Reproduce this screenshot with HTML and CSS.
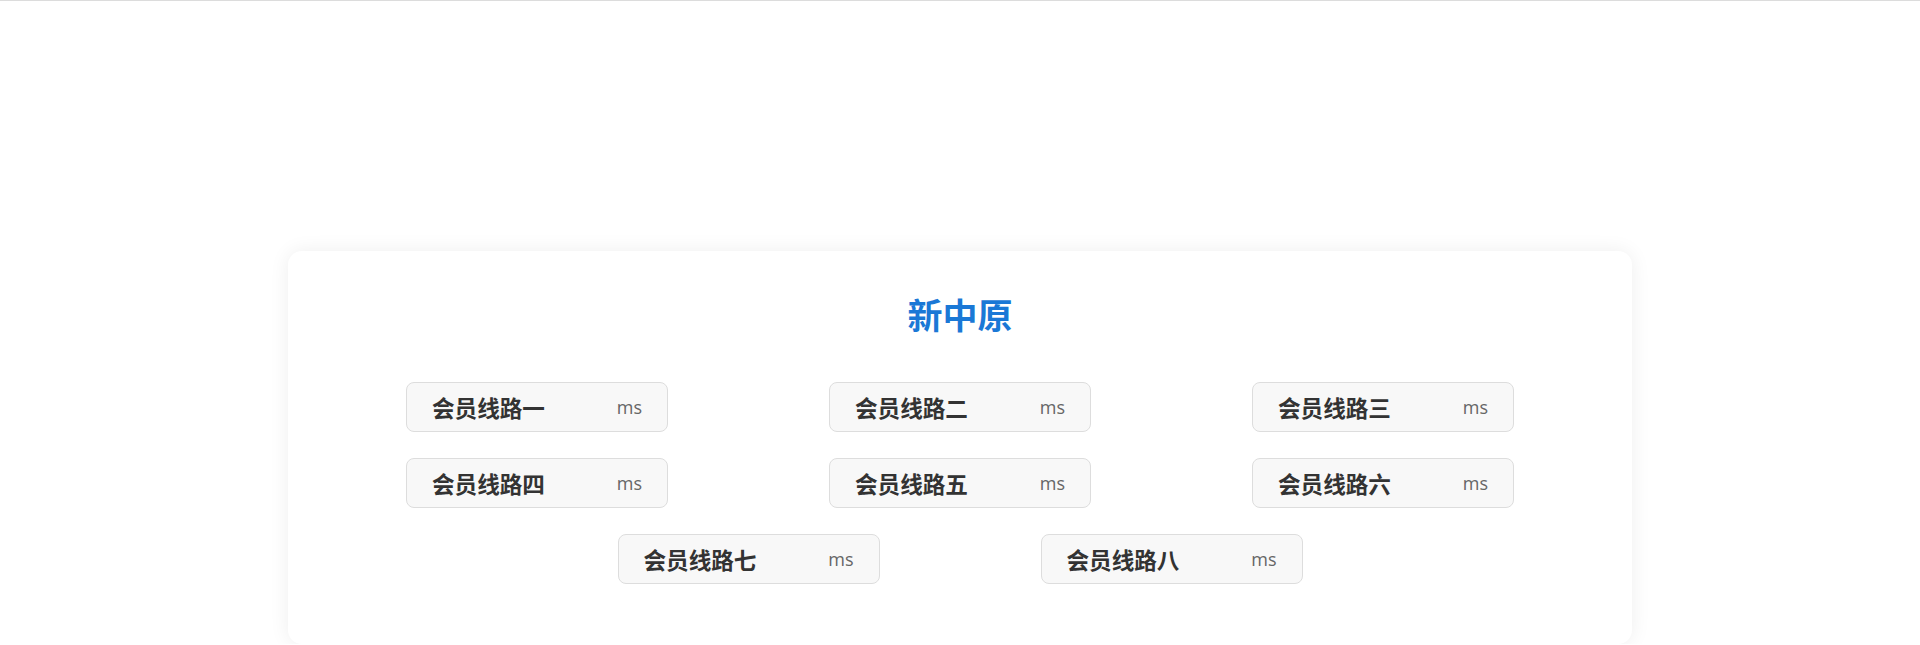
FILE: index.html
```html
<!DOCTYPE html>
<html lang="zh-CN">
<head>
    <meta charset="UTF-8">
    <meta name="viewport" content="width=device-width, initial-scale=1.0">
    <title>新中原</title>
    <link rel="stylesheet" href="styles.css">
</head>
<body>
    <div class="topbar"></div>

    <div class="wrap">
        <div class="card">
            <h1 class="title">新中原</h1>

            <ul class="lines">
                <li class="line"><span class="name">会员线路一</span><span class="ping">ms</span></li>
                <li class="line"><span class="name">会员线路二</span><span class="ping">ms</span></li>
                <li class="line"><span class="name">会员线路三</span><span class="ping">ms</span></li>
                <li class="line"><span class="name">会员线路四</span><span class="ping">ms</span></li>
                <li class="line"><span class="name">会员线路五</span><span class="ping">ms</span></li>
                <li class="line"><span class="name">会员线路六</span><span class="ping">ms</span></li>
                <li class="line"><span class="name">会员线路七</span><span class="ping">ms</span></li>
                <li class="line"><span class="name">会员线路八</span><span class="ping">ms</span></li>
            </ul>
        </div>
    </div>
</body>
</html>
```

FILE: styles.css
```css
body {
    margin: 0;
    background: #fff;
    font-family: "Open Sans", "Noto Sans CJK SC", sans-serif;
}
.topbar {
    height: 1px;
    background: #dcdcdc;
}
.wrap {
    padding-top: 250px;
}
.card {
    width: 70%;
    margin: 0 auto;
    background: #fff;
    border-radius: 14px;
    box-shadow: 0 0 20px rgba(0,0,0,0.07);
    padding: 37px 0 60px;
}
.title {
    margin: 0;
    text-align: center;
    font-family: "Noto Sans CJK SC", sans-serif;
    font-size: 35px;
    line-height: 52px;
    font-weight: bold;
    color: #1a78d6;
}
.lines {
    list-style: none;
    margin: 42px 0 0;
    padding: 0;
    display: flex;
    flex-wrap: wrap;
    justify-content: center;
    column-gap: 161px;
    row-gap: 26px;
}
.line {
    box-sizing: border-box;
    width: 262px;
    height: 50px;
    padding: 0 25px;
    display: flex;
    align-items: center;
    justify-content: space-between;
    background: #f8f8f8;
    border: 1px solid #ddd;
    border-radius: 8px;
}
.name {
    font-family: "Noto Sans CJK SC", sans-serif;
    font-size: 22.6px;
    font-weight: bold;
    color: #333;
}
.ping {
    font-size: 18px;
    color: #666;
}
```
